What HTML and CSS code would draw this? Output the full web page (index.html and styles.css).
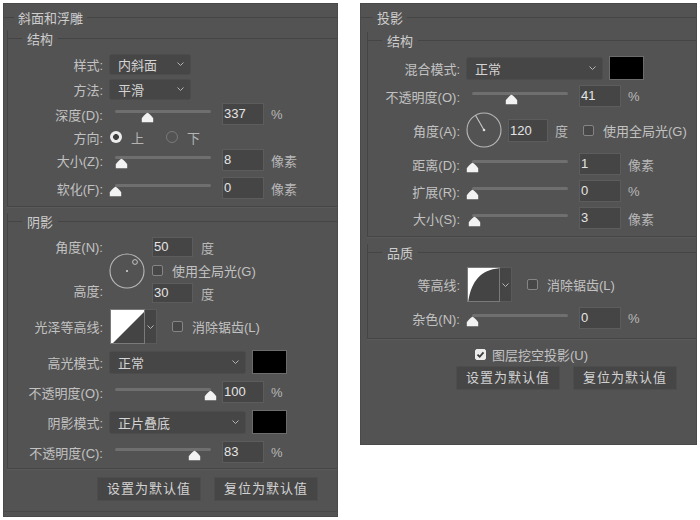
FILE: index.html
```html
<!DOCTYPE html>
<html lang="zh-CN">
<head>
    <meta charset="UTF-8">
    <title>图层样式</title>
    <link rel="stylesheet" href="styles.css">
</head>
<body>
    <!-- 斜面和浮雕 -->
    <div class="panel panel-left">
        <div class="legend legend-main">斜面和浮雕</div>

        <div class="group group-first">
            <div class="legend">结构</div>
            <div class="rows rows-structure">
                <div class="row">
                    <span class="label">样式:</span>
                    <div class="select select-short"><span>内斜面</span><svg class="chev" width="7" height="4"><path d="M.5.5l3 3 3-3"/></svg></div>
                </div>
                <div class="row">
                    <span class="label">方法:</span>
                    <div class="select select-short"><span>平滑</span><svg class="chev" width="7" height="4"><path d="M.5.5l3 3 3-3"/></svg></div>
                </div>
                <div class="row">
                    <span class="label">深度(D):</span>
                    <div class="slider" style="--pos:.337"><div class="track"></div><svg class="thumb" width="13" height="11"><path d="M6.5 .8C7.4 .8 12.2 5.4 12.2 6.6V10.2H.8V6.6C.8 5.4 5.6 .8 6.5 .8Z"/></svg></div>
                    <div class="input">337</div>
                    <span class="unit">%</span>
                </div>
                <div class="row row-radio">
                    <span class="label">方向:</span>
                    <div class="radios">
                        <span class="radio-opt"><span class="radio on"></span>上</span>
                        <span class="radio-opt"><span class="radio"></span>下</span>
                    </div>
                </div>
                <div class="row">
                    <span class="label">大小(Z):</span>
                    <div class="slider" style="--pos:.07"><div class="track"></div><svg class="thumb" width="13" height="11"><path d="M6.5 .8C7.4 .8 12.2 5.4 12.2 6.6V10.2H.8V6.6C.8 5.4 5.6 .8 6.5 .8Z"/></svg></div>
                    <div class="input">8</div>
                    <span class="unit">像素</span>
                </div>
                <div class="row row-last">
                    <span class="label">软化(F):</span>
                    <div class="slider" style="--pos:0"><div class="track"></div><svg class="thumb" width="13" height="11"><path d="M6.5 .8C7.4 .8 12.2 5.4 12.2 6.6V10.2H.8V6.6C.8 5.4 5.6 .8 6.5 .8Z"/></svg></div>
                    <div class="input">0</div>
                    <span class="unit">像素</span>
                </div>
            </div>
        </div>

        <div class="group group-shadow">
            <div class="legend">阴影</div>
            <div class="rows rows-shadow">
                <div class="dial-block">
                    <div class="dial-labels">
                        <span class="label">角度(N):</span>
                        <span class="label">高度:</span>
                    </div>
                    <svg class="dial" width="36" height="36">
                        <circle cx="18" cy="18" r="17" fill="none" stroke="#b8b8b8" stroke-width="1.1"/>
                        <circle cx="18" cy="18" r="1" fill="#d8d8d8"/>
                        <circle cx="26" cy="9" r="2.4" fill="none" stroke="#c4c4c4" stroke-width="1"/>
                    </svg>
                    <div class="dial-fields">
                        <div class="field-row"><div class="input input-sm">50</div><span class="unit">度</span></div>
                        <div class="field-row"><span class="check"></span><span>使用全局光(G)</span></div>
                        <div class="field-row"><div class="input input-sm">30</div><span class="unit">度</span></div>
                    </div>
                </div>
                <div class="row row-contour">
                    <span class="label">光泽等高线:</span>
                    <div class="contour">
                        <svg class="contour-img" width="35" height="35">
                            <rect width="35" height="35" fill="#444"/>
                            <path d="M0 0H35L0 35Z" fill="#fff"/>
                        </svg>
                        <div class="contour-drop"><svg class="chev" width="7" height="4"><path d="M.5.5l3 3 3-3"/></svg></div>
                    </div>
                    <span class="check check-gap"></span><span>消除锯齿(L)</span>
                </div>
                <div class="row row-tall">
                    <span class="label">高光模式:</span>
                    <div class="select select-wide"><span>正常</span><svg class="chev" width="7" height="4"><path d="M.5.5l3 3 3-3"/></svg></div>
                    <div class="swatch"></div>
                </div>
                <div class="row row-tall">
                    <span class="label">不透明度(O):</span>
                    <div class="slider" style="--pos:.99"><div class="track"></div><svg class="thumb" width="13" height="11"><path d="M6.5 .8C7.4 .8 12.2 5.4 12.2 6.6V10.2H.8V6.6C.8 5.4 5.6 .8 6.5 .8Z"/></svg></div>
                    <div class="input">100</div>
                    <span class="unit">%</span>
                </div>
                <div class="row row-tall">
                    <span class="label">阴影模式:</span>
                    <div class="select select-wide"><span>正片叠底</span><svg class="chev" width="7" height="4"><path d="M.5.5l3 3 3-3"/></svg></div>
                    <div class="swatch"></div>
                </div>
                <div class="row row-tall">
                    <span class="label">不透明度(C):</span>
                    <div class="slider" style="--pos:.83"><div class="track"></div><svg class="thumb" width="13" height="11"><path d="M6.5 .8C7.4 .8 12.2 5.4 12.2 6.6V10.2H.8V6.6C.8 5.4 5.6 .8 6.5 .8Z"/></svg></div>
                    <div class="input">83</div>
                    <span class="unit">%</span>
                </div>
            </div>
        </div>

        <div class="btn-bar btn-bar-left">
            <div class="btn">设置为默认值</div>
            <div class="btn">复位为默认值</div>
        </div>
    </div>

    <!-- 投影 -->
    <div class="panel panel-right">
        <div class="legend legend-main">投影</div>

        <div class="group group-drop">
            <div class="legend">结构</div>
            <div class="rows rows-drop">
                <div class="row row-tall">
                    <span class="label">混合模式:</span>
                    <div class="select select-wide"><span>正常</span><svg class="chev" width="7" height="4"><path d="M.5.5l3 3 3-3"/></svg></div>
                    <div class="swatch"></div>
                </div>
                <div class="row">
                    <span class="label">不透明度(O):</span>
                    <div class="slider" style="--pos:.41"><div class="track"></div><svg class="thumb" width="13" height="11"><path d="M6.5 .8C7.4 .8 12.2 5.4 12.2 6.6V10.2H.8V6.6C.8 5.4 5.6 .8 6.5 .8Z"/></svg></div>
                    <div class="input">41</div>
                    <span class="unit">%</span>
                </div>
                <div class="row row-dial">
                    <span class="label">角度(A):</span>
                    <svg class="dial" width="36" height="36">
                        <circle cx="18" cy="18" r="17" fill="none" stroke="#b8b8b8" stroke-width="1.1"/>
                        <line x1="18" y1="18" x2="9.5" y2="3.3" stroke="#c8c8c8" stroke-width="1.1"/>
                        <circle cx="18" cy="18" r="1.3" fill="#e0e0e0"/>
                    </svg>
                    <div class="input input-dial">120</div>
                    <span class="unit">度</span>
                    <span class="check check-gap"></span><span>使用全局光(G)</span>
                </div>
                <div class="row">
                    <span class="label">距离(D):</span>
                    <div class="slider" style="--pos:.01"><div class="track"></div><svg class="thumb" width="13" height="11"><path d="M6.5 .8C7.4 .8 12.2 5.4 12.2 6.6V10.2H.8V6.6C.8 5.4 5.6 .8 6.5 .8Z"/></svg></div>
                    <div class="input">1</div>
                    <span class="unit">像素</span>
                </div>
                <div class="row">
                    <span class="label">扩展(R):</span>
                    <div class="slider" style="--pos:0"><div class="track"></div><svg class="thumb" width="13" height="11"><path d="M6.5 .8C7.4 .8 12.2 5.4 12.2 6.6V10.2H.8V6.6C.8 5.4 5.6 .8 6.5 .8Z"/></svg></div>
                    <div class="input">0</div>
                    <span class="unit">%</span>
                </div>
                <div class="row">
                    <span class="label">大小(S):</span>
                    <div class="slider" style="--pos:.03"><div class="track"></div><svg class="thumb" width="13" height="11"><path d="M6.5 .8C7.4 .8 12.2 5.4 12.2 6.6V10.2H.8V6.6C.8 5.4 5.6 .8 6.5 .8Z"/></svg></div>
                    <div class="input">3</div>
                    <span class="unit">像素</span>
                </div>
            </div>
        </div>

        <div class="group group-quality">
            <div class="legend">品质</div>
            <div class="rows rows-quality">
                <div class="row row-contour">
                    <span class="label">等高线:</span>
                    <div class="contour">
                        <svg class="contour-img" width="33" height="35">
                            <rect width="33" height="35" fill="#444"/>
                            <path d="M0 0H33C13 1 3 13 0 35Z" fill="#fff"/>
                        </svg>
                        <div class="contour-drop"><svg class="chev" width="7" height="4"><path d="M.5.5l3 3 3-3"/></svg></div>
                    </div>
                    <span class="check check-gap"></span><span>消除锯齿(L)</span>
                </div>
                <div class="row">
                    <span class="label">杂色(N):</span>
                    <div class="slider" style="--pos:0"><div class="track"></div><svg class="thumb" width="13" height="11"><path d="M6.5 .8C7.4 .8 12.2 5.4 12.2 6.6V10.2H.8V6.6C.8 5.4 5.6 .8 6.5 .8Z"/></svg></div>
                    <div class="input">0</div>
                    <span class="unit">%</span>
                </div>
            </div>
        </div>

        <div class="knockout">
            <span class="check on"><svg width="9" height="9"><path d="M1.5 4.6l2.2 2.2 3.8-4.4" fill="none" stroke="#3a3a3a" stroke-width="1.8"/></svg></span>
            <span>图层挖空投影(U)</span>
        </div>

        <div class="btn-bar btn-bar-right">
            <div class="btn">设置为默认值</div>
            <div class="btn">复位为默认值</div>
        </div>
    </div>
</body>
</html>
```

FILE: styles.css
```css
:root {
    --panel-bg: #535353;
    --line-color: #454545;
    --field-bg: #454545;
    --text-color: #c2c2c2;
    --value-color: #e4e4e4;
}
* {
    box-sizing: border-box;
}
body {
    margin: 0;
    padding: 3px;
    display: flex;
    align-items: flex-start;
    gap: 22px;
    background: #fff;
    font-family: "Liberation Sans", "Noto Sans CJK SC", sans-serif;
    font-size: 13px;
    color: var(--text-color);
}
.panel {
    background: var(--panel-bg);
    border: 1px solid #4a4a4a;
    padding-top: 5px;
}
.panel-left {
    width: 335px;
    height: 514px;
}
.panel-right {
    width: 337px;
    height: 442px;
}

/* section titles with a rule on both sides */
.legend {
    display: flex;
    align-items: center;
    gap: 5px;
    height: 17px;
    margin: -8px 0 0 -1px;
    color: #cdcdcd;
}
.legend::before,
.legend::after {
    content: "";
    height: 1px;
    background: var(--line-color);
}
.legend::before {
    width: 15px;
}
.legend::after {
    flex: 1;
}
.legend-main {
    margin: 0;
    gap: 4px;
}
.legend-main::before {
    width: 10px;
}
.panel-right .legend-main::before {
    width: 12px;
}

.group {
    border-left: 1px solid var(--line-color);
    border-bottom: 1px solid var(--line-color);
    box-shadow: 0 1px 0 #5a5a5a;
}
.panel-left .group {
    margin-left: 3px;
}
.panel-right .group {
    margin-left: 6px;
}
.group-first {
    margin-top: 12px;
    padding-bottom: 7px;
}
.group-shadow {
    margin-top: 14px;
    padding-bottom: 4px;
}
.group-drop {
    margin-top: 14px;
    padding-bottom: 7px;
}
.group-quality {
    margin-top: 15px;
    padding-bottom: 9px;
}

.rows {
    display: flex;
    flex-direction: column;
}
.rows-structure {
    padding-top: 6px;
    gap: 3px;
}
.rows-shadow {
    padding-top: 7px;
    gap: 6px;
}
.rows-drop {
    padding-top: 7px;
    gap: 5px;
}
.rows-quality {
    padding-top: 6px;
    gap: 5px;
}

.row {
    display: flex;
    align-items: center;
    gap: 6px;
    height: 22px;
}
.row-radio {
    height: 18px;
}
.row-last {
    margin-top: 3px;
}
.row-tall {
    height: 24px;
}
.row-contour {
    height: 35px;
}
.row-dial {
    height: 36px;
}
.label {
    flex: none;
    width: 95px;
    text-align: right;
    white-space: nowrap;
}
.panel-right .label {
    width: 92px;
}

.select {
    display: flex;
    align-items: center;
    justify-content: space-between;
    height: 21px;
    padding: 0 6px 0 8px;
    background: #464646;
    border: 1px solid #4c4c4c;
    border-radius: 3px;
    color: #d4d4d4;
}
.select-short {
    width: 82px;
}
.select-wide {
    width: 137px;
    height: 23px;
}
.chev path {
    fill: none;
    stroke: #b4b4b4;
    stroke-width: 1;
}
.swatch {
    width: 35px;
    height: 24px;
    background: #000;
    border: 1px solid #6c6c6c;
}

.slider {
    position: relative;
    flex: none;
    width: 107px;
    height: 22px;
    padding: 7px 5px 0 6px;
}
.track {
    height: 3px;
    border-radius: 2px;
    background: #6f6f6f;
}
.thumb {
    position: absolute;
    top: 9px;
    left: calc(6px + 96px * var(--pos) - 6.5px);
}
.thumb path {
    fill: #f2f2f2;
}

.input {
    flex: none;
    width: 42px;
    height: 22px;
    line-height: 20px;
    padding-left: 1px;
    background: var(--field-bg);
    border: 1px solid #5c5c5c;
    color: var(--value-color);
}
.input-sm {
    width: 41px;
    height: 20px;
    line-height: 18px;
}
.input-dial {
    width: 40px;
    height: 23px;
    line-height: 21px;
}
.unit {
    margin-left: 1px;
    color: #b8b8b8;
}

.radios {
    display: flex;
    gap: 22px;
    margin-left: 1px;
    color: #b4b4b4;
}
.radio-opt {
    display: flex;
    align-items: center;
    gap: 9px;
}
.radio {
    width: 12px;
    height: 12px;
    border-radius: 50%;
    border: 1.5px solid #7a7a7a;
}
.radio.on {
    border: none;
    background: radial-gradient(circle, #3e3e3e 0 2.6px, #ececec 3.2px);
}

.check {
    flex: none;
    display: flex;
    align-items: center;
    justify-content: center;
    width: 11px;
    height: 11px;
    border: 1px solid #858585;
    border-radius: 2px;
    background: #474747;
}
.check.on {
    background: #ececec;
    border-color: #ececec;
}
.check-gap {
    margin: 0 3px 0 9px;
}

/* angle dial with its two value rows */
.dial-block {
    display: flex;
    align-items: center;
    height: 66px;
}
.dial-labels {
    display: flex;
    flex-direction: column;
    justify-content: space-between;
    height: 66px;
    padding: 1px 0;
}
.dial-labels .label {
    line-height: 20px;
}
.dial-block .dial {
    margin: 2px 0 0 6px;
}
.dial-fields {
    display: flex;
    flex-direction: column;
    gap: 3px;
    margin-left: 7px;
}
.field-row {
    display: flex;
    align-items: center;
    gap: 7px;
    height: 20px;
}
.field-row .check {
    margin-right: 2px;
}

.contour {
    display: flex;
    margin-left: 1px;
}
.contour-img {
    border: 1px solid #7a7a7a;
}
.contour-drop {
    display: flex;
    align-items: center;
    justify-content: center;
    width: 12px;
    height: 35px;
    background: #454545;
    border: 1px solid #5a5a5a;
    border-left: none;
}

.knockout {
    display: flex;
    align-items: center;
    gap: 6px;
    height: 16px;
    margin-top: 7px;
    padding-left: 114px;
}

.btn-bar {
    display: flex;
    justify-content: flex-end;
    gap: 13px;
    padding-right: 19px;
}
.btn-bar-left {
    margin-top: 8px;
    padding-bottom: 10px;
    border-bottom: 1px solid #494949;
}
.btn-bar-right {
    margin-top: 4px;
}
.btn {
    width: 104px;
    height: 24px;
    line-height: 22px;
    text-align: center;
    letter-spacing: 1px;
    background: #464646;
    border: 1px solid #4d4d4d;
    color: #d2d2d2;
}
```
